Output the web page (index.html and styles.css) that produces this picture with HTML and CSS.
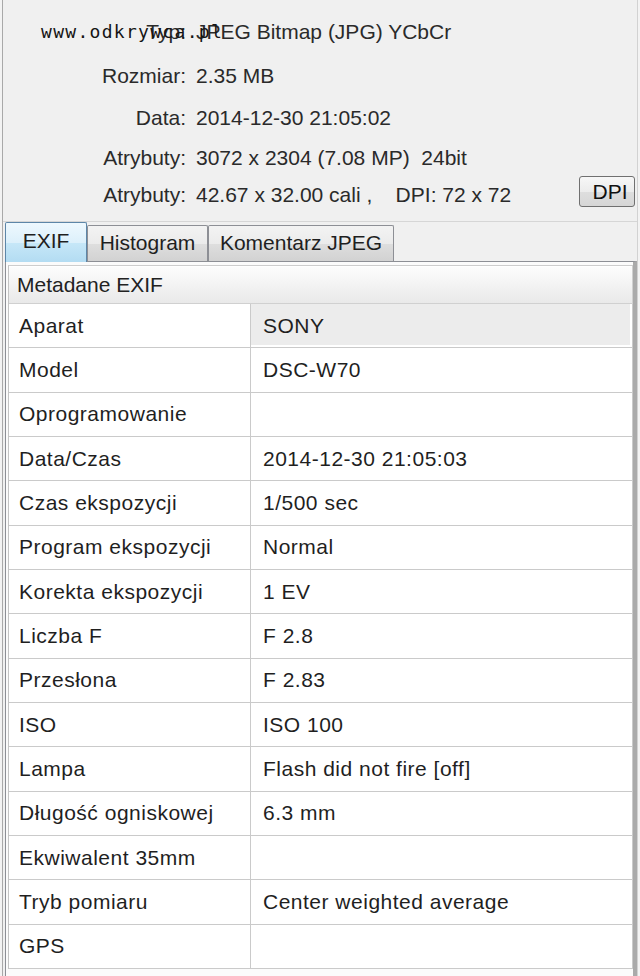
FILE: index.html
```html
<!DOCTYPE html>
<html lang="pl">
<head>
<meta charset="utf-8">
<title>Metadane EXIF</title>
<link rel="stylesheet" href="styles.css">
</head>
<body>
<div class="frame">
  <div class="info">
    <div class="wm">www.odkrywca.pl</div>
    <span class="lbl">Typ:</span><span class="val">JPEG Bitmap (JPG) YCbCr</span>
    <span class="lbl">Rozmiar:</span><span class="val">2.35 MB</span>
    <span class="lbl">Data:</span><span class="val">2014-12-30 21:05:02</span>
    <span class="lbl">Atrybuty:</span><span class="val">3072 x 2304 (7.08 MP)  24bit</span>
    <span class="lbl">Atrybuty:</span><span class="val val-btn"><span>42.67 x 32.00 cali ,    DPI: 72 x 72</span><span class="btn">DPI</span></span>
  </div>
  <div class="tabs">
    <div class="tab tab-exif active">EXIF</div>
    <div class="tab tab-hist">Histogram</div>
    <div class="tab tab-kom">Komentarz JPEG</div>
  </div>
  <div class="panel">
    <div class="table">
      <div class="head">Metadane EXIF</div>
      <div class="row"><div class="k">Aparat</div><div class="v sel">SONY</div></div>
      <div class="row"><div class="k">Model</div><div class="v">DSC-W70</div></div>
      <div class="row"><div class="k">Oprogramowanie</div><div class="v"></div></div>
      <div class="row"><div class="k">Data/Czas</div><div class="v">2014-12-30 21:05:03</div></div>
      <div class="row"><div class="k">Czas ekspozycji</div><div class="v">1/500 sec</div></div>
      <div class="row"><div class="k">Program ekspozycji</div><div class="v">Normal</div></div>
      <div class="row"><div class="k">Korekta ekspozycji</div><div class="v">1 EV</div></div>
      <div class="row"><div class="k">Liczba F</div><div class="v">F 2.8</div></div>
      <div class="row"><div class="k">Przesłona</div><div class="v">F 2.83</div></div>
      <div class="row"><div class="k">ISO</div><div class="v">ISO 100</div></div>
      <div class="row"><div class="k">Lampa</div><div class="v">Flash did not fire [off]</div></div>
      <div class="row"><div class="k">Długość ogniskowej</div><div class="v">6.3 mm</div></div>
      <div class="row"><div class="k">Ekwiwalent 35mm</div><div class="v"></div></div>
      <div class="row"><div class="k">Tryb pomiaru</div><div class="v">Center weighted average</div></div>
      <div class="row"><div class="k">GPS</div><div class="v"></div></div>
    </div>
  </div>
</div>
</body>
</html>
```

FILE: styles.css
```css
html, body {
  margin: 0;
  padding: 0;
  height: 976px;
  overflow: hidden;
  background: #f3f3f3;
}

body {
  font-family: "Liberation Sans", Arial, sans-serif;
  font-size: 21px;
  color: #262626;
}

.frame {
  box-sizing: border-box;
  margin-left: 2px;
  width: 636px;
  height: 976px;
  border-left: 1px solid #a9a9a9;
  border-right: 1px solid #d2d2d2;
  background: #f0f0f0;
  display: flex;
  flex-direction: column;
}

.info {
  position: relative;
  box-sizing: border-box;
  height: 222px;
  padding-top: 9px;
  border-bottom: 1px solid #d6d6d6;
  display: grid;
  grid-template-columns: 183px 1fr;
  grid-template-rows: 45px 43px 42px 38px 36px;
  column-gap: 10px;
  align-items: center;
  color: #2a2a2a;
}

.lbl {
  text-align: right;
  white-space: pre;
}

.val {
  white-space: pre;
}

.val-btn {
  display: flex;
  align-items: center;
  height: 100%;
}

.btn {
  align-self: flex-start;
  margin-top: -1px;
  margin-left: auto;
  margin-right: 2px;
  box-sizing: border-box;
  width: 56px;
  height: 31px;
  border: 1px solid #707070;
  border-radius: 3px;
  background: linear-gradient(#f7f7f7, #ececec 50%, #dedede 51%, #d6d6d6);
  color: #111;
  display: flex;
  align-items: center;
  justify-content: center;
  padding-left: 6px;
}

.wm {
  position: absolute;
  left: 38px;
  top: 21px;
  font-family: "DejaVu Sans Mono", "Liberation Mono", monospace;
  font-size: 18px;
  letter-spacing: 1.3px;
  color: #151515;
}

.tabs {
  display: flex;
  align-items: flex-end;
  height: 39px;
  padding-left: 2px;
  box-sizing: border-box;
}

.tab {
  box-sizing: border-box;
  height: 36px;
  border: 1px solid #8d8f95;
  border-bottom: none;
  border-radius: 2px 2px 0 0;
  background: linear-gradient(#f3f3f3, #ebebeb 50%, #dedede 51%, #d2d2d2);
  display: flex;
  align-items: center;
  justify-content: center;
  padding-bottom: 2px;
  color: #1f1f1f;
}

.tab-exif { width: 82px; }
.tab-hist { width: 121px; }
.tab-kom { width: 186px; }

.tab.active {
  position: relative;
  z-index: 1;
  height: 40px;
  margin-bottom: -1px;
  border-color: #5d86a8;
  background: linear-gradient(#eef8fe, #dcf0fb 50%, #c6e7f8 51%, #b3dcf2);
  padding-bottom: 3px;
}

.panel {
  flex: 1;
  margin-left: 2px;
  box-sizing: border-box;
  border-top: 1px solid #8d8f95;
  border-left: 1px solid #8d8f95;
  border-right: 4px solid #aaaaaa;
  background: #fbfbfb;
  padding: 3px 0 0 2px;
}

.table {
  border-top: 1px solid #cdcdcd;
  border-left: 1px solid #c4c4c4;
  background: #fff;
}

.head {
  box-sizing: border-box;
  height: 38px;
  border-bottom: 1px solid #d0d0d0;
  border-right: 1px solid #d0d0d0;
  background: linear-gradient(#fdfdfd, #f3f3f3 50%, #e9e9e9);
  box-shadow: inset 0 1px 0 #ffffff;
  display: flex;
  align-items: center;
  padding-left: 8px;
  color: #222;
}

.row {
  display: grid;
  grid-template-columns: 242px 382px;
  height: 44.33px;
}

.k, .v {
  box-sizing: border-box;
  border-right: 1px solid #cacaca;
  border-bottom: 1px solid #cacaca;
  display: flex;
  align-items: center;
  white-space: nowrap;
  letter-spacing: 0.5px;
  color: #1f1f1f;
}

.k { padding-left: 10px; }
.v { padding-left: 12px; }

.v.sel {
  background: #ececec;
  box-shadow: inset -2px -2px 0 #ffffff;
}
```
